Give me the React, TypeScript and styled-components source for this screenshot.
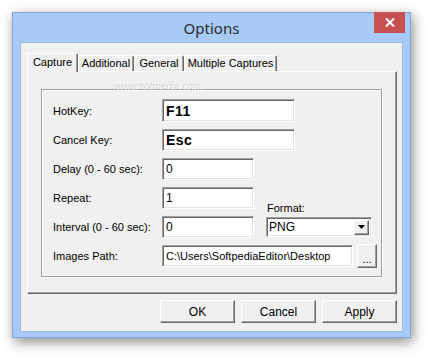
import styled, { createGlobalStyle } from 'styled-components';

const GlobalStyle = createGlobalStyle`
  html, body {
    margin: 0;
    padding: 0;
    background: #ffffff;
    width: 431px;
    height: 358px;
    overflow: hidden;
  }
  * {
    box-sizing: border-box;
  }
`;

const Page = styled.div`
  padding: 12px 0 0 12px;
  font-family: 'Liberation Sans', Arial, sans-serif;
  color: #000;
`;

const Window = styled.div`
  position: relative;
  width: 399px;
  height: 326px;
  border: 1px solid #7fa6d8;
  background: #a7caf6;
  display: flex;
  flex-direction: column;
  box-shadow: 2px 4px 12px rgba(0, 0, 0, 0.45);
`;

const TitleBar = styled.div`
  height: 29px;
  display: grid;
  grid-template-columns: 1fr auto 1fr;
`;

const Title = styled.span`
  grid-column: 2;
  align-self: center;
  font-family: 'Noto Sans', 'Open Sans', sans-serif;
  font-size: 15px;
  color: #2b2b2b;
  margin-top: 1px;
`;

const CloseButton = styled.button`
  grid-column: 3;
  justify-self: end;
  align-self: start;
  width: 31px;
  height: 21px;
  margin: -1px 5px 0 0;
  padding: 0;
  border: none;
  background: #c75050;
  display: flex;
  align-items: center;
  justify-content: center;
`;

const Client = styled.div`
  flex: 1;
  margin: 0 7px 5px 7px;
  background: #f0f0f0;
  border: 1px solid #9dbbe2;
  padding: 10px 5px 0 6px;
  display: flex;
  flex-direction: column;
`;

const TabStrip = styled.div`
  display: flex;
  align-items: flex-end;
  height: 18px;
  position: relative;
  z-index: 1;
`;

const Tab = styled.div<{ $w: number; $active?: boolean }>`
  width: ${(p) => p.$w}px;
  height: ${(p) => (p.$active ? 19 : 16)}px;
  margin-bottom: ${(p) => (p.$active ? -1 : 0)}px;
  background: #f0f0f0;
  border-top: 1px solid #ffffff;
  border-left: 1px solid #ffffff;
  border-right: 1px solid #696969;
  border-top-left-radius: 2px;
  border-top-right-radius: 2px;
  box-shadow: inset -1px 0 0 #a0a0a0;
  font-size: 11px;
  line-height: ${(p) => (p.$active ? 16 : 14)}px;
  text-align: center;
  white-space: nowrap;
`;

const TabPanel = styled.div`
  height: 223px;
  border-top: 1px solid #ffffff;
  border-left: 1px solid #ffffff;
  border-right: 1px solid #696969;
  border-bottom: 1px solid #696969;
  box-shadow: inset -1px -1px 0 #a0a0a0;
  padding: 17px 14px 16px 13px;
`;

const GroupBox = styled.div`
  height: 100%;
  border: 1px solid #a0a0a0;
  box-shadow: inset 1px 1px 0 #ffffff, 1px 1px 0 #ffffff;
  padding: 9px 0 0 11px;
  display: flex;
  flex-direction: column;
  gap: 7px;
`;

const Row = styled.div<{ $h?: number }>`
  display: flex;
  align-items: center;
  height: ${(p) => p.$h ?? 22}px;
`;

const Label = styled.span`
  width: 109px;
  font-size: 11px;
  flex-shrink: 0;
`;

const TextBox = styled.input<{ $w: number; $big?: boolean }>`
  width: ${(p) => p.$w}px;
  height: 100%;
  margin: 0;
  padding: 0 0 0 3px;
  background: #ffffff;
  border-top: 1px solid #a0a0a0;
  border-left: 1px solid #a0a0a0;
  border-right: 1px solid #ffffff;
  border-bottom: 1px solid #ffffff;
  box-shadow: inset 1px 1px 0 #696969, inset -1px -1px 0 #e3e3e3;
  font-family: 'Liberation Sans', Arial, sans-serif;
  font-size: ${(p) => (p.$big ? 14 : 12)}px;
  font-weight: ${(p) => (p.$big ? 700 : 400)};
  letter-spacing: ${(p) => (p.$big ? '0.5px' : '0')};
  color: #000;
  outline: none;
`;

const PathBox = styled(TextBox)`
  font-size: 11px;
`;

const Raised = styled.button`
  margin: 0;
  padding: 0;
  background: #f0f0f0;
  border-top: 1px solid #ffffff;
  border-left: 1px solid #ffffff;
  border-right: 1px solid #696969;
  border-bottom: 1px solid #696969;
  box-shadow: inset -1px -1px 0 #a0a0a0;
  font-family: 'Liberation Sans', Arial, sans-serif;
  color: #000;
`;

const BrowseButton = styled(Raised)`
  width: 20px;
  height: 24px;
  margin-left: 4px;
  font-size: 11px;
  line-height: 1;
  padding-top: 6px;
`;

const FormatLabel = styled.span`
  margin-left: 13px;
  align-self: flex-end;
  margin-bottom: -5px;
  font-size: 11px;
`;

const Combo = styled.div`
  width: 106px;
  height: 20px;
  margin-left: 12px;
  background: #ffffff;
  border-top: 1px solid #a0a0a0;
  border-left: 1px solid #a0a0a0;
  border-right: 1px solid #ffffff;
  border-bottom: 1px solid #ffffff;
  box-shadow: inset 1px 1px 0 #696969, inset -1px -1px 0 #e3e3e3;
  display: flex;
  align-items: center;
  justify-content: space-between;
  padding: 0 2px 0 2px;
  font-size: 12px;
`;

const ComboArrow = styled(Raised)`
  width: 15px;
  height: 15px;
  display: flex;
  align-items: center;
  justify-content: center;
`;

const ButtonRow = styled.div`
  display: flex;
  justify-content: flex-end;
  gap: 6px;
  margin-top: 6px;
`;

const DialogButton = styled(Raised)`
  width: 75px;
  height: 23px;
  font-size: 12px;
`;

const Watermark = styled.span`
  position: absolute;
  left: 83px;
  top: 40px;
  font-family: 'Liberation Sans', Arial, sans-serif;
  font-size: 18px;
  font-weight: 700;
  letter-spacing: 3px;
  color: rgba(0, 0, 0, 0.05);
  text-shadow: 1px 1px 0 rgba(255, 255, 255, 0.6);
  pointer-events: none;
`;

const WatermarkUrl = styled.span`
  position: absolute;
  left: 102px;
  top: 68px;
  font-size: 10px;
  color: rgba(0, 0, 0, 0.16);
  text-shadow: 1px 1px 0 rgba(255, 255, 255, 0.8);
  pointer-events: none;
`;

const tabs = [
  { label: 'Capture', w: 51 },
  { label: 'Additional', w: 56 },
  { label: 'General', w: 50 },
  { label: 'Multiple Captures', w: 93 },
];

export default function App() {
  return (
    <Page>
      <GlobalStyle />
      <Window>
        <TitleBar>
          <Title>Options</Title>
          <CloseButton aria-label="Close">
            <svg width="10" height="9" viewBox="0 0 10 9">
              <path d="M1 0.5 L9 8.5 M9 0.5 L1 8.5" stroke="#ffffff" strokeWidth="2" />
            </svg>
          </CloseButton>
        </TitleBar>
        <Client>
          <TabStrip>
            {tabs.map((t, i) => (
              <Tab key={t.label} $w={t.w} $active={i === 0}>
                {t.label}
              </Tab>
            ))}
          </TabStrip>
          <TabPanel>
            <GroupBox>
              <Row $h={23}>
                <Label>HotKey:</Label>
                <TextBox $w={133} $big readOnly value="F11" />
              </Row>
              <Row>
                <Label>Cancel Key:</Label>
                <TextBox $w={133} $big readOnly value="Esc" />
              </Row>
              <Row>
                <Label>Delay (0 - 60 sec):</Label>
                <TextBox $w={92} readOnly value="0" />
              </Row>
              <Row>
                <Label>Repeat:</Label>
                <TextBox $w={92} readOnly value="1" />
                <FormatLabel>Format:</FormatLabel>
              </Row>
              <Row>
                <Label>Interval (0 - 60 sec):</Label>
                <TextBox $w={92} readOnly value="0" />
                <Combo>
                  <span>PNG</span>
                  <ComboArrow aria-label="Open">
                    <svg width="7" height="4" viewBox="0 0 7 4">
                      <path d="M0 0 H7 L3.5 4 Z" fill="#000" />
                    </svg>
                  </ComboArrow>
                </Combo>
              </Row>
              <Row>
                <Label>Images Path:</Label>
                <PathBox $w={191} readOnly value="C:\Users\SoftpediaEditor\Desktop" />
                <BrowseButton>...</BrowseButton>
              </Row>
            </GroupBox>
          </TabPanel>
          <ButtonRow>
            <DialogButton>OK</DialogButton>
            <DialogButton>Cancel</DialogButton>
            <DialogButton>Apply</DialogButton>
          </ButtonRow>
        </Client>
        <Watermark>SOFTPEDIA</Watermark>
        <WatermarkUrl>www.softpedia.com</WatermarkUrl>
      </Window>
    </Page>
  );
}
